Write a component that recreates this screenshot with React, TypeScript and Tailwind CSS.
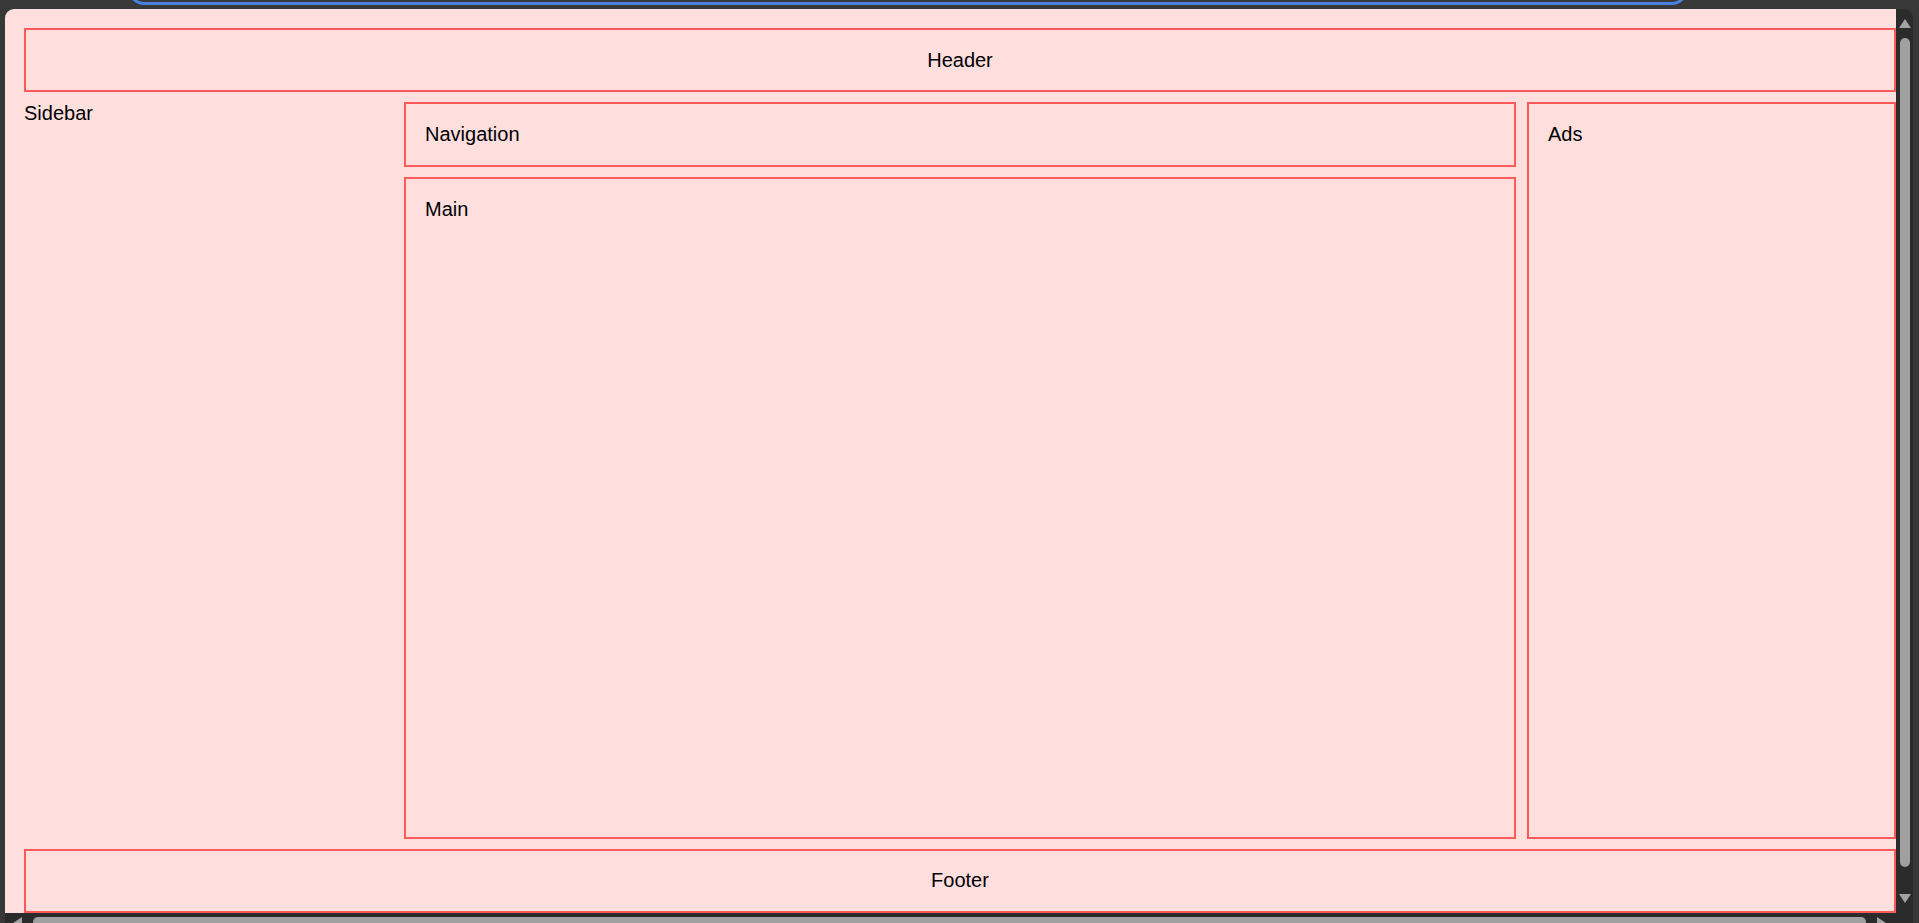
import React from "react";

const box = "border-2 border-[#ff5a5a]";

function Arrow({ dir }: { dir: "up" | "down" | "left" | "right" }) {
  const pts = {
    up: "6,0 12,9 0,9",
    down: "0,0 12,0 6,9",
    left: "0,6 9,0 9,12",
    right: "0,0 9,6 0,12",
  }[dir];
  const horiz = dir === "left" || dir === "right";
  return (
    <svg
      width={horiz ? 9 : 12}
      height={horiz ? 12 : 9}
      viewBox={horiz ? "0 0 9 12" : "0 0 12 9"}
      className="shrink-0"
    >
      <polygon points={pts} fill="#a3a3a3" />
    </svg>
  );
}

export default function App() {
  return (
    <div
      className="relative h-[923px] w-[1919px] overflow-hidden bg-[#383838] pl-[5px] pt-[9px] text-black"
      style={{ fontFamily: '"Liberation Sans", Arial, sans-serif' }}
    >
      {/* focused bar peeking in at the top */}
      <div className="absolute left-[128px] top-[-40px] h-[45px] w-[1560px] rounded-[16px] border-[3px] border-[#4a80e0]" />

      <div className="flex h-[914px] w-[1908px] flex-col overflow-hidden rounded-t-[9px] bg-[#2b2b2b]">
        <div className="flex h-[904px]">
          <div className="w-[1891px] shrink-0 overflow-hidden bg-[#ffdfde] pl-[19px] pt-[19px] text-[20px] leading-[23px]">
            <div className="grid grid-cols-[369px_1112px_369px] grid-rows-[64px_65px_662px_64px] gap-x-[11px] gap-y-[10px]">
              <div className={`${box} col-span-3 flex items-center justify-center`}>Header</div>
              <div className="row-span-2">Sidebar</div>
              <div className={`${box} px-[19px] py-[19px]`}>Navigation</div>
              <div className={`${box} row-span-2 px-[19px] py-[19px]`}>Ads</div>
              <div className={`${box} px-[19px] py-[19px]`}>Main</div>
              <div className={`${box} col-span-3 flex items-center justify-center pb-[1px]`}>Footer</div>
            </div>
          </div>

          {/* vertical scrollbar */}
          <div className="flex w-[17px] flex-col items-center pt-[10px]">
            <Arrow dir="up" />
            <div className="mt-[10px] h-[829px] w-[10px] rounded-full bg-[#a0a0a0]" />
            <div className="mt-[27px]">
              <Arrow dir="down" />
            </div>
          </div>
        </div>

        {/* horizontal scrollbar */}
        <div className="flex h-[10px] items-start pl-[8px] pt-[4px]">
          <Arrow dir="left" />
          <div className="ml-[11px] h-[10px] w-[1833px] rounded-full bg-[#a0a0a0]" />
          <div className="ml-[11px]">
            <Arrow dir="right" />
          </div>
        </div>
      </div>
    </div>
  );
}
